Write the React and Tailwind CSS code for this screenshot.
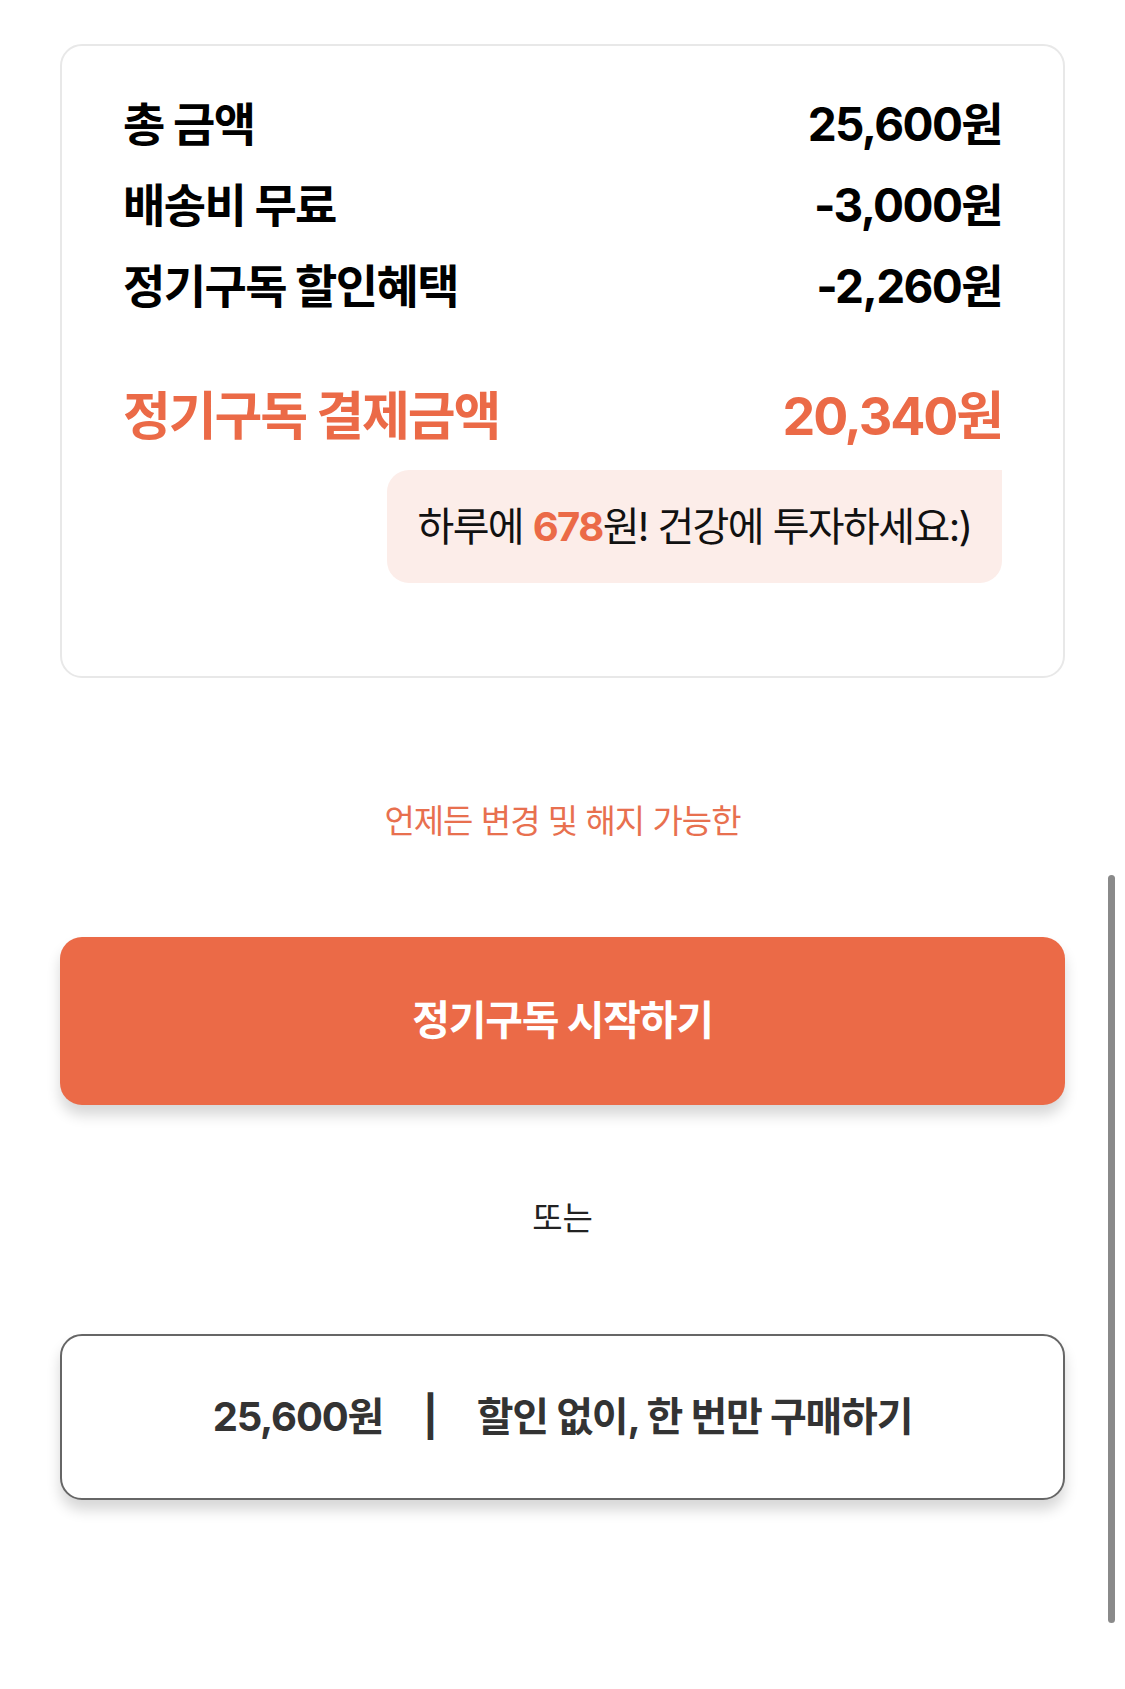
import React from "react";

const font = { fontFamily: '"Inter", "Noto Sans CJK KR", sans-serif' };

function Row({ label, value }) {
  return (
    <div className="flex items-center justify-between h-[50px] text-[46px] font-bold text-black tracking-[-0.035em]">
      <span>{label}</span>
      <span>{value}</span>
    </div>
  );
}

export default function App() {
  return (
    <div
      className="relative min-h-[1689px] w-full bg-white px-[60px] pt-[44px] font-['Inter','Noto_Sans_CJK_KR',sans-serif]"
      style={font}
    >
      <div className="rounded-[22px] border-2 border-[#e8e8e8] px-[61px] pt-[53px] pb-[93px]">
        <div className="flex flex-col gap-[31px]">
          <Row label="총 금액" value="25,600원" />
          <Row label="배송비 무료" value="-3,000원" />
          <Row label="정기구독 할인혜택" value="-2,260원" />
        </div>
        <div className="mt-[78px] flex items-center justify-between h-[56px] text-[52px] font-bold text-[#eb6a47] tracking-[-0.04em]">
          <span>정기구독 결제금액</span>
          <span>20,340원</span>
        </div>
        <div className="mt-[25px] flex justify-end">
          <div className="flex h-[113px] w-[615px] items-center justify-center rounded-[22px] rounded-tr-none bg-[#fcede9] text-[40px] text-[#111] tracking-[-0.04em]">
            <span>
              하루에 <span className="font-bold text-[#eb6a47]">678</span>원! 건강에 투자하세요:)
            </span>
          </div>
        </div>
      </div>

      <p className="mt-[123px] h-[40px] text-center text-[33px] leading-[40px] text-[#e8704f] tracking-[-0.03em]">
        언제든 변경 및 해지 가능한
      </p>

      <button className="mt-[96px] flex h-[168px] w-full items-center justify-center rounded-[22px] bg-[#eb6a47] text-[41px] font-bold text-white tracking-[-0.03em] shadow-[0_10px_14px_rgba(0,0,0,0.16)]">
        정기구독 시작하기
      </button>

      <p className="mt-[93px] h-[40px] text-center text-[33px] leading-[40px] text-[#222]">
        또는
      </p>

      <button className="mt-[96px] flex h-[166px] w-full items-center justify-center rounded-[22px] border-2 border-[#666] bg-white text-[40px] font-bold text-[#333] tracking-[-0.03em] shadow-[0_10px_14px_rgba(0,0,0,0.16)]">
        <span>25,600원</span>
        <span className="mx-[40px]">|</span>
        <span>할인 없이, 한 번만 구매하기</span>
      </button>

      <div className="absolute left-[1108px] top-[875px] h-[748px] w-[7px] rounded-full bg-[#8a8a8a]" />
    </div>
  );
}
